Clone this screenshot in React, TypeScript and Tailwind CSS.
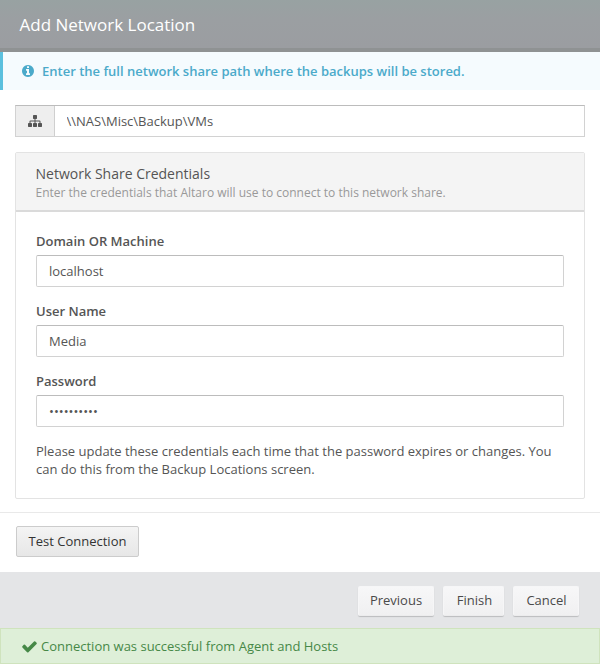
import React from "react";

type IconProps = { path: string; className: string };

function Icon({ path, className }: IconProps) {
  return (
    <svg viewBox="0 0 1792 1792" fill="currentColor" className={className} aria-hidden="true">
      <path d={path} />
    </svg>
  );
}

const INFO =
  "M1152 1376v-160q0-14-9-23t-23-9h-96v-512q0-14-9-23t-23-9h-320q-14 0-23 9t-9 23v160q0 14 9 23t23 9h96v320h-96q-14 0-23 9t-9 23v160q0 14 9 23t23 9h448q14 0 23-9t9-23zm-128-896v-160q0-14-9-23t-23-9h-192q-14 0-23 9t-9 23v160q0 14 9 23t23 9h192q14 0 23-9t9-23zm640 416q0 209-103 385.5t-279.5 279.5-385.5 103-385.5-103-279.5-279.5-103-385.5 103-385.5 279.5-279.5 385.5-103 385.5 103 279.5 279.5 103 385.5z";
const SITEMAP =
  "M1792 1248v320q0 40-28 68t-68 28h-320q-40 0-68-28t-28-68v-320q0-40 28-68t68-28h96v-192h-512v192h96q40 0 68 28t28 68v320q0 40-28 68t-68 28h-320q-40 0-68-28t-28-68v-320q0-40 28-68t68-28h96v-192h-512v192h96q40 0 68 28t28 68v320q0 40-28 68t-68 28h-320q-40 0-68-28t-28-68v-320q0-40 28-68t68-28h96v-192q0-52 38-90t90-38h512v-192h-96q-40 0-68-28t-28-68v-320q0-40 28-68t68-28h320q40 0 68 28t28 68v320q0 40-28 68t-68 28h-96v192h512q52 0 90 38t38 90v192h96q40 0 68 28t28 68z";
const CHECK =
  "M1671 566q0 40-28 68l-724 724-136 136q-28 28-68 28t-68-28l-136-136-362-362q-28-28-28-68t28-68l136-136q28-28 68-28t68 28l294 295 656-657q28-28 68-28t68 28l136 136q28 28 28 68z";

function Field({ label, value, type = "text" }: { label: string; value: string; type?: string }) {
  return (
    <label className="flex flex-col">
      <span className="mb-[5px] h-[18px] font-semibold leading-[18px]">{label}</span>
      <input
        type={type}
        defaultValue={value}
        className="h-8 rounded-[2px] border border-[#d2d2d2] border-t-[#bcbcbc] bg-white px-3 outline-none"
      />
    </label>
  );
}

function FooterButton({ children, className }: { children: React.ReactNode; className: string }) {
  return (
    <button
      className={`h-[30px] rounded-[2px] border border-[#f6f6f7] border-b-[#ececed] bg-linear-to-b from-[#f7f7f8] to-[#f0f0f1] pb-[2px] text-[#4a4a4a] shadow-[0_1px_1px_rgba(0,0,0,0.18)] ${className}`}
    >
      {children}
    </button>
  );
}

export default function App() {
  return (
    <div className="flex h-[664px] w-[600px] flex-col bg-white font-['Open_Sans','Noto_Sans',sans-serif] text-[13px] leading-[18px] text-[#555]">
      <header className="flex h-[52px] items-center border-b-4 border-[#8f9293] bg-linear-to-b from-[#98a2a2] via-[#9b9fa2] via-40% to-[#9b9da1] pl-[19.5px] pt-[2px] text-[17px] text-white">
        <h1>Add Network Location</h1>
      </header>

      <div className="flex h-[38px] items-center border-l-3 border-[#5bc0de] bg-[#f5fbfe] pl-[18px] font-semibold text-[#4baaca]">
        <Icon path={INFO} className="mr-[7px] size-[14px]" />
        <span>Enter the full network share path where the backups will be stored.</span>
      </div>

      <main className="flex h-[422px] flex-col px-[15px] pt-[15px]">
        <div className="flex h-8 border border-[#d2d2d2] border-t-[#bcbcbc]">
          <div className="flex w-[39px] items-center justify-center border-r border-[#cfcfcf] bg-[#eee]">
            <Icon path={SITEMAP} className="size-[14px]" />
          </div>
          <input defaultValue="\\NAS\Misc\Backup\VMs" className="min-w-0 flex-1 px-[11.5px] outline-none" />
        </div>

        <section className="mt-[15px] flex h-[347px] flex-col rounded-[2px] border border-[#e3e3e3]">
          <div className="h-[59px] border-b-2 border-[#dadada] bg-[#f4f4f4] pl-[19.5px] pt-3">
            <h2 className="text-[14px] leading-[18px]">Network Share Credentials</h2>
            <p className="pt-px text-[12px] leading-[18px] text-[#999]">
              Enter the credentials that Altaro will use to connect to this network share.
            </p>
          </div>
          <div className="flex flex-col gap-[15px] px-5 pt-5">
            <Field label="Domain OR Machine" value="localhost" />
            <Field label="User Name" value="Media" />
            <Field label="Password" value="xxxxxxxxxx" type="password" />
            <p className="leading-[18px]">
              Please update these credentials each time that the password expires or changes. You
              <br />
              can do this from the Backup Locations screen.
            </p>
          </div>
        </section>
      </main>

      <div className="h-[60px] border-t border-[#e9e9e9] px-4 pt-[13px]">
        <button className="h-[31px] w-[123px] rounded-[2px] border border-[#ccc] bg-linear-to-b from-[#f4f4f4] to-[#e7e7e7] pb-[2px] text-[#333]">
          Test Connection
        </button>
      </div>

      <footer className="flex h-14 justify-end gap-[9px] bg-[#e4e5e7] pr-[21px] pt-[14px]">
        <FooterButton className="w-[76px]">Previous</FooterButton>
        <FooterButton className="w-[61px] pl-[2px]">Finish</FooterButton>
        <FooterButton className="w-[66px] pl-px">Cancel</FooterButton>
      </footer>

      <div className="flex h-9 items-center border border-[#cfe3bd] bg-[#deefd8] pl-5 text-[#468847]">
        <Icon path={CHECK} className="mr-[3px] size-[17px]" />
        <span>Connection was successful from Agent and Hosts</span>
      </div>
    </div>
  );
}
